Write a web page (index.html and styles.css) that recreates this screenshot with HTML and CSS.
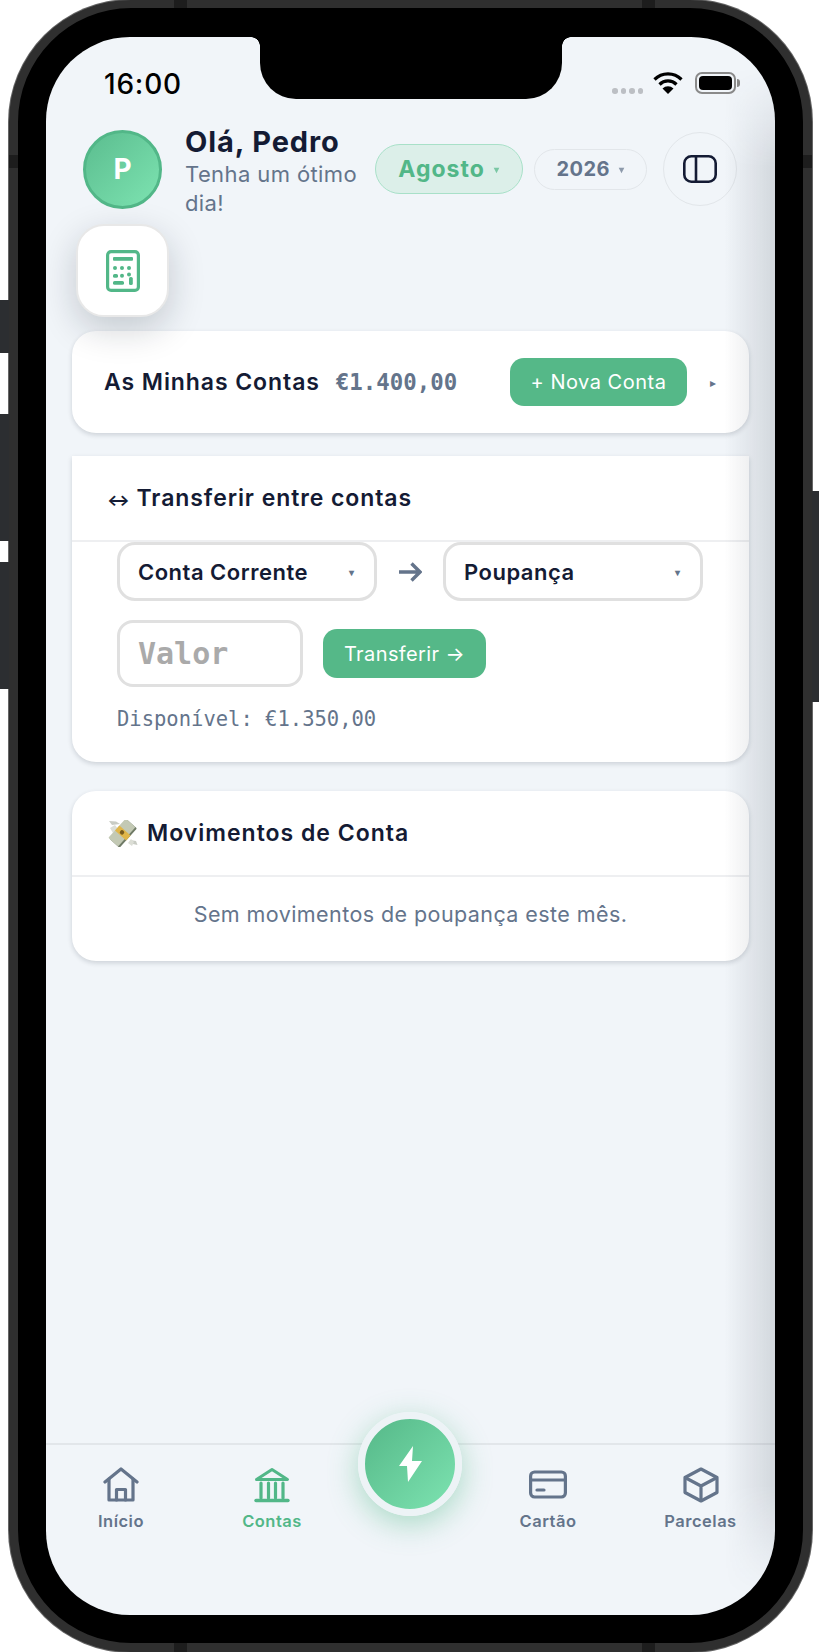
FILE: index.html
```html
<!DOCTYPE html>
<html lang="en">
<head>
    <meta charset="UTF-8">
    <meta name="viewport" content="width=device-width, initial-scale=1.0">
    <title>Contas</title>
    <link rel="stylesheet" href="styles.css">
</head>
<body>
    <div class="phone">
        <span class="side-btn btn-mute"></span>
        <span class="side-btn btn-vol-up"></span>
        <span class="side-btn btn-vol-down"></span>
        <span class="side-btn btn-power"></span>
        <span class="band band-top-l"></span>
        <span class="band band-top-r"></span>
        <span class="band band-bot-l"></span>
        <span class="band band-bot-r"></span>
        <span class="band band-left"></span>
        <span class="band band-right"></span>

        <div class="screen">
            <div class="notch"></div>

            <div class="status-bar">
                <span class="time">16:00</span>
                <div class="status-icons">
                    <div class="dots"><i></i><i></i><i></i><i></i></div>
                    <svg class="wifi" viewBox="0 0 30 22" width="30" height="22">
                        <path d="M1.5 7.5a19 19 0 0 1 27 0" fill="none" stroke="#000" stroke-width="3.2"/>
                        <path d="M6.5 12.5a12 12 0 0 1 17 0" fill="none" stroke="#000" stroke-width="3.2"/>
                        <path d="M15 22l-5.5-5.5a7.8 7.8 0 0 1 11 0z" fill="#000"/>
                    </svg>
                    <div class="battery"><i></i></div>
                </div>
            </div>

            <div class="header">
                <div class="avatar">P</div>
                <div class="greeting">
                    <div class="name">Olá, Pedro</div>
                    <div class="sub">Tenha um ótimo dia!</div>
                </div>
                <div class="pill pill-month">Agosto <span class="caret">▾</span></div>
                <div class="pill pill-year">2026 <span class="caret">▾</span></div>
                <div class="round-btn">
                    <svg viewBox="0 0 34 28" width="34" height="28" fill="none" stroke="#141b34" stroke-width="2.6">
                        <rect x="1.3" y="1.3" width="31.4" height="25.4" rx="7"/>
                        <path d="M13 1.3v25.4"/>
                    </svg>
                </div>
            </div>

            <div class="calc-btn">
                <svg viewBox="0 0 34 42" width="34" height="42">
                    <rect x="1.6" y="1.6" width="30.8" height="38.800" rx="3.5" fill="none" stroke="#52b788" stroke-width="3.2"/>
                    <rect x="7" y="7" width="20" height="3.8" rx="1" fill="#52b788"/>
                    <g fill="#52b788">
                        <circle cx="9" cy="18" r="2"/><circle cx="16" cy="18" r="2"/><circle cx="23" cy="18" r="2"/>
                        <rect x="7" y="24" width="5" height="3.8" rx="1.6"/><circle cx="16" cy="25.800" r="2"/><circle cx="23" cy="24.500" r="2"/>
                        <rect x="7" y="31" width="11" height="3.8" rx="1.6"/><rect x="23" y="27" width="3.8" height="8" rx="1.6"/>
                    </g>
                </svg>
            </div>

            <div class="card accounts">
                <span class="card-title">As Minhas Contas</span>
                <span class="amount">€1.400,00</span>
                <button class="btn btn-new">+ Nova Conta</button>
                <span class="expand">▸</span>
            </div>

            <div class="card transfer">
                <div class="card-head">
                    <span class="card-title"><span class="swap">↔</span> Transferir entre contas</span>
                </div>
                <div class="transfer-body">
                    <div class="select-row">
                        <div class="select">Conta Corrente <span class="select-caret">▾</span></div>
                        <svg class="select-arrow" viewBox="0 0 24 20" width="24" height="20" fill="none" stroke="#64748b" stroke-width="3.4">
                            <path d="M1 10h21M13.500 1.500 22 10l-8.500 8.500"/>
                        </svg>
                        <div class="select">Poupança <span class="select-caret">▾</span></div>
                    </div>
                    <div class="value-row">
                        <input class="value-input" type="text" placeholder="Valor">
                        <button class="btn btn-transfer">Transferir →</button>
                    </div>
                    <div class="available">Disponível: €1.350,00</div>
                </div>
            </div>

            <div class="card moves">
                <div class="card-head">
                    <svg class="money" viewBox="0 0 30 27" width="30" height="27">
                        <path d="M4 5 1 1l7 .5 4 2.500zM22 20l6 1 1.500 4-7-1.500z" fill="#c9ccc4"/>
                        <path d="M2 8 5 13l5-4-3-4zM20 23l4 3 2-4-3-3z" fill="#dcded6"/>
                        <g transform="rotate(-48 15 13.500)">
                            <rect x="2" y="7.500" width="26" height="13" rx="1" fill="#6f7a66"/>
                            <rect x="2" y="5.500" width="26" height="13" rx="1" fill="#c3c9b4"/>
                            <rect x="12" y="5.500" width="6.500" height="15" fill="#e0b64a"/>
                            <circle cx="15.200" cy="12" r="2.200" fill="#7a5c1e"/>
                        </g>
                    </svg>
                    <span class="card-title">Movimentos de Conta</span>
                </div>
                <p class="empty">Sem movimentos de poupança este mês.</p>
            </div>

            <div class="bottom-nav">
                <div class="nav-item">
                    <svg viewBox="0 0 36 36" width="36" height="36" fill="none" stroke="#64748b" stroke-width="3.2" stroke-linejoin="round" stroke-linecap="round">
                        <path d="M2 15 18 2l16 13"/>
                        <path d="M6 12v21h24V12"/>
                        <path d="M13.500 33V22.500h9V33"/>
                    </svg>
                    <span>Início</span>
                </div>
                <div class="nav-item active">
                    <svg viewBox="0 0 36 36" width="36" height="36" fill="none" stroke="#52b788" stroke-width="3.2" stroke-linecap="round" stroke-linejoin="round">
                        <path d="M2.500 12.500 18 2.500l15.500 10z" stroke-width="3"/>
                        <path d="M7 16v15M14.500 16v15M21.500 16v15M29 16v15"/>
                        <path d="M2 33.500h32" stroke-width="3.4"/>
                    </svg>
                    <span>Contas</span>
                </div>
                <div></div>
                <div class="nav-item">
                    <svg viewBox="0 0 38 36" width="38" height="36" fill="none" stroke="#64748b" stroke-width="3.2" stroke-linecap="round">
                        <rect x="1.600" y="5" width="34.800" height="25" rx="4"/>
                        <path d="M1.600 13h34.800"/>
                        <path d="M8 23h7"/>
                    </svg>
                    <span>Cartão</span>
                </div>
                <div class="nav-item">
                    <svg viewBox="0 0 36 36" width="36" height="36" fill="none" stroke="#64748b" stroke-width="3.2" stroke-linejoin="round">
                        <path d="M18 2 34 10.500v15L18 34 2 25.500v-15z"/>
                        <path d="M2 10.500 18 19l16-8.500M18 19v15"/>
                    </svg>
                    <span>Parcelas</span>
                </div>
                <div class="fab">
                    <svg viewBox="0 0 24 36" width="24" height="36">
                        <path d="M15 0 1 20h8l1 16 14-21h-10z" fill="#fff"/>
                    </svg>
                </div>
            </div>

            <div class="edge-shade"></div>
        </div>
    </div>
</body>
</html>
```

FILE: styles.css
```css
* { box-sizing: border-box; }
body { margin: 0; background-color: white; font-family: Inter, "Noto Sans", sans-serif; color: #141b34; }

.phone { position: relative; width: 803px; height: 1652px; margin-left: 9px; padding: 29px 28px 28px 28px; background-color: black; border: 9px solid #2f2f2f; border-top-width: 8px; border-radius: 122px; box-shadow: 0 0 0 1px #666; }
.side-btn { position: absolute; width: 9px; background-color: #2c2e31; }
.btn-mute { left: -18px; top: 292px; height: 53px; }
.btn-vol-up { left: -18px; top: 406px; height: 127px; }
.btn-vol-down { left: -18px; top: 554px; height: 127px; }
.btn-power { right: -16px; top: 483px; height: 211px; width: 7px; }
.band { position: absolute; background-color: #1d1d1d; }
.band-top-l { top: -8px; left: 156px; width: 13px; height: 8px; }
.band-top-r { top: -8px; left: 624px; width: 13px; height: 8px; }
.band-bot-l { bottom: -9px; left: 156px; width: 13px; height: 9px; }
.band-bot-r { bottom: -9px; left: 624px; width: 13px; height: 9px; }
.band-left { left: -9px; top: 147px; width: 9px; height: 13px; }
.band-right { right: -9px; top: 147px; width: 9px; height: 13px; }

.screen { position: relative; display: flex; flex-direction: column; height: 100%; background-color: #f1f5f9; border-radius: 84px; overflow: hidden; }
.notch { position: absolute; top: 0; left: 214px; width: 302px; height: 62px; background-color: black; border-radius: 0 0 36px 36px; z-index: 3; }
.notch::before, .notch::after { content: ""; position: absolute; top: 0; width: 9px; height: 9px; }
.notch::before { left: -9px; background: radial-gradient(circle at 0 100%, transparent 8.500px, black 9px); }
.notch::after { right: -9px; background: radial-gradient(circle at 100% 100%, transparent 8.500px, black 9px); }
.edge-shade { position: absolute; inset: 0; pointer-events: none; z-index: 5; background: linear-gradient(to right, transparent 93%, rgba(30, 41, 59, 0.14)); -webkit-mask-image: linear-gradient(to bottom, transparent 30px, black 130px, black calc(100% - 130px), transparent calc(100% - 20px)); mask-image: linear-gradient(to bottom, transparent 30px, black 130px, black calc(100% - 130px), transparent calc(100% - 20px)); }

.status-bar { display: flex; justify-content: space-between; height: 85px; padding: 29px 39px 0 58px; }
.time { font-size: 28px; font-weight: 500; letter-spacing: 0.8px; color: black; line-height: 36px; }
.status-icons { display: flex; align-items: flex-start; height: 24px; margin-top: 6px; }
.dots { display: flex; gap: 3px; margin-top: 16px; margin-right: 10px; }
.dots i { width: 5.500px; height: 5.500px; border-radius: 50%; background-color: #bcbfc4; }
.battery { position: relative; width: 41px; height: 22px; margin-left: 12px; border: 2px solid #8a8a8a; border-radius: 7px; padding: 2px; }
.battery i { display: block; height: 100%; background-color: black; border-radius: 4px; }
.battery::after { content: ""; position: absolute; right: -6px; top: 5px; width: 3px; height: 8px; background-color: #8a8a8a; border-radius: 0 3px 3px 0; }

.header { display: flex; align-items: center; height: 94px; padding-left: 37px; }
.avatar { display: flex; align-items: center; justify-content: center; width: 79px; height: 79px; flex-shrink: 0; border-radius: 50%; border: 3px solid #52b788; background: linear-gradient(135deg, #5bbd8f, #7de3b1); color: white; font-size: 28px; font-weight: 700; }
.greeting { width: 190px; margin: 4px 0 0 23px; flex-shrink: 0; }
.name { font-size: 29px; font-weight: 700; letter-spacing: 0.9px; line-height: 36px; }
.sub { font-size: 22px; letter-spacing: 0.4px; line-height: 29.500px; color: #64748b; }
.pill { display: flex; align-items: center; justify-content: center; flex-shrink: 0; border-radius: 30px; font-weight: 700; }
.pill-month { width: 148px; height: 50px; background-color: #dcefe9; border: 1.500px solid #a8e0c8; color: #52b788; font-size: 23px; letter-spacing: 1px; }
.pill-year { width: 113px; height: 41px; margin-left: 11px; background-color: #f1f5f9; border: 1.500px solid #e2e6ea; color: #64748b; font-size: 20px; letter-spacing: 0.5px; }
.caret { font-size: 10px; margin-left: 9px; opacity: 0.7; }
.round-btn { display: flex; align-items: center; justify-content: center; width: 74px; height: 74px; margin-left: 16px; flex-shrink: 0; border: 1.500px solid #e2e6ea; border-radius: 50%; }

.calc-btn { position: relative; z-index: 2; display: flex; align-items: center; justify-content: center; width: 93px; height: 93px; margin: 8px 0 14px 30px; background-color: white; border: 2px solid #e8e8e8; border-radius: 28px; box-shadow: 0 12px 36px rgba(15, 23, 42, 0.2); }

.card { margin: 0 26px; background-color: white; border-radius: 24px; box-shadow: 0 2px 5px rgba(15, 23, 42, 0.16); }
.card-title { font-size: 23px; font-weight: 600; letter-spacing: 0.92px; white-space: nowrap; }
.swap { font-size: 17px; font-weight: 700; letter-spacing: 0; }
.card-head { display: flex; align-items: center; border-bottom: 2px solid #eeeff1; padding-left: 35px; }

.accounts { display: flex; align-items: center; height: 102px; padding: 0 33px 0 32px; }
.amount { margin-left: 16px; font-family: "DejaVu Sans Mono", monospace; font-size: 22.400px; font-weight: 700; color: #64748b; }
.btn { border: none; background-color: #55b888; color: white; font-family: Inter, sans-serif; cursor: pointer; }
.btn-new { width: 177px; height: 48px; margin-left: auto; border-radius: 14px; font-size: 20px; letter-spacing: 0.5px; }
.expand { margin-left: 23px; font-size: 12px; color: #64748b; }

.transfer { height: 306px; margin-top: 23px; border-radius: 0 0 24px 24px; }
.transfer .card-head { height: 86px; }
.transfer-body { padding: 0 46px 0 45px; }
.select-row { display: flex; align-items: center; }
.select { display: flex; align-items: center; justify-content: space-between; width: 261px; height: 59px; padding: 0 20px 0 18px; border: 3px solid #e0e0e0; border-radius: 18px; font-size: 22px; font-weight: 600; letter-spacing: 0.5px; }
.select-caret { font-size: 10px; color: #64748b; }
.select-arrow { margin: 0 21px 0 21px; flex-shrink: 0; }
.value-row { display: flex; align-items: center; margin-top: 19px; }
.value-input { width: 186px; height: 67px; padding: 0 18px; border: 3px solid #e0e0e0; border-radius: 16px; font-family: "DejaVu Sans Mono", monospace; font-size: 30px; font-weight: 700; background-color: white; }
.value-input::placeholder { color: #aaaaaa; opacity: 1; }
.btn-transfer { width: 163px; height: 49px; margin-left: 20px; border-radius: 14px; font-size: 20px; letter-spacing: 0.4px; }
.available { margin-top: 20px; font-family: "DejaVu Sans Mono", monospace; font-size: 20.500px; color: #64748b; }

.moves { height: 170px; margin-top: 29px; }
.moves .card-head { height: 86px; padding-left: 36px; }
.moves .card-title { letter-spacing: 1px; }
.money { margin-right: 9px; }
.empty { margin: 24px 0 0 0; text-align: center; font-size: 21.500px; letter-spacing: 0.42px; color: #64748b; }

.bottom-nav { position: relative; display: grid; grid-template-columns: 150px 152px 122px 156px 149px; height: 172px; margin-top: auto; border-top: 2px solid #e2e6ea; padding-top: 22px; }
.nav-item { display: flex; flex-direction: column; align-items: center; gap: 8px; font-size: 16.500px; font-weight: 600; letter-spacing: 0.5px; color: #64748b; }
.nav-item.active { color: #52b788; }
.fab { position: absolute; left: 312px; top: -33px; display: flex; align-items: center; justify-content: center; width: 104px; height: 104px; border: 7px solid #edf3f6; border-radius: 50%; background: linear-gradient(135deg, #55b888, #7de3b1); box-shadow: 0 8px 30px rgba(82, 183, 136, 0.45); }
```
